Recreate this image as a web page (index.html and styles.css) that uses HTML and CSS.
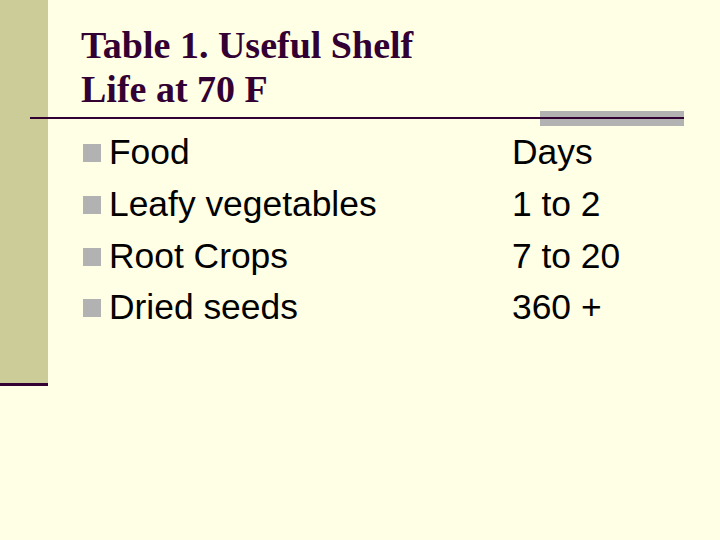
FILE: index.html
```html
<!DOCTYPE html>
<html>
<head>
<meta charset="utf-8">
<link rel="stylesheet" href="styles.css">
</head>
<body>
<div class="slide">
  <h1 class="title">Table 1. Useful Shelf<br>Life at 70 F</h1>
  <div class="rule"></div>
  <div class="table">
    <div class="item">Food</div><div class="val">Days</div>
    <div class="item">Leafy vegetables</div><div class="val">1 to 2</div>
    <div class="item">Root Crops</div><div class="val">7 to 20</div>
    <div class="item">Dried seeds</div><div class="val">360 +</div>
  </div>
</div>
</body>
</html>
```
FILE: styles.css
```css
html, body {
  margin: 0;
  padding: 0;
}
body {
  width: 720px;
  height: 540px;
  overflow: hidden;
  background:
    linear-gradient(#CCCC99, #CCCC99) 0 0 / 48px 383px no-repeat,
    linear-gradient(#330033, #330033) 0 383px / 48px 3px no-repeat,
    #FFFFE5;
}
.slide {
  width: 720px;
  height: 540px;
}
.title {
  margin: 0 0 0 81px;
  padding-top: 23px;
  height: 88px;
  font-family: "Liberation Serif", "Times New Roman", serif;
  font-weight: bold;
  font-size: 38px;
  line-height: 44px;
  color: #330033;
}
.rule {
  margin: 0 36px 0 30px;
  height: 15px;
  background:
    linear-gradient(#330033, #330033) 0 6px / 100% 2px no-repeat,
    linear-gradient(#B2B2B2, #B2B2B2) right 0 / 144px 100% no-repeat;
}
.table {
  display: grid;
  grid-template-columns: 429px 1fr;
  margin-left: 83px;
  margin-top: 1px;
  font-family: "Liberation Sans", Arial, sans-serif;
  font-size: 35.4px;
  line-height: 51.8px;
  color: #000;
}
.item::before {
  content: "";
  display: inline-block;
  width: 18px;
  height: 18px;
  background: #B2B2B2;
  margin-right: 8px;
  vertical-align: 2px;
}
.val {
  white-space: nowrap;
}
```
